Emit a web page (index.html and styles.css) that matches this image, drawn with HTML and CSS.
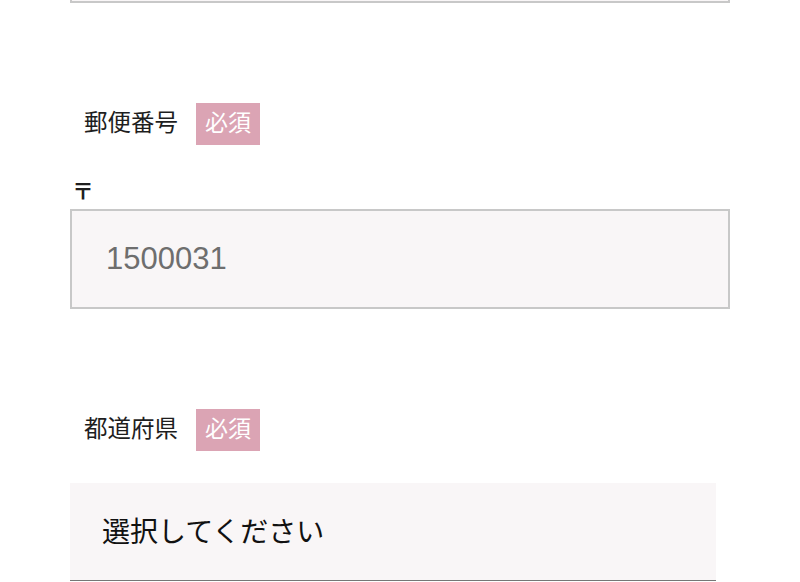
FILE: index.html
```html
<!DOCTYPE html>
<html lang="ja">
<head>
<meta charset="utf-8">
<link rel="stylesheet" href="styles.css">
</head>
<body>
<div class="form">
  <div class="prev-box"></div>

  <div class="field">
    <div class="label-row">
      <span class="label">郵便番号</span>
      <span class="badge">必須</span>
    </div>
    <div class="postal-mark">〒</div>
    <div class="text-input">1500031</div>
  </div>

  <div class="field">
    <div class="label-row">
      <span class="label">都道府県</span>
      <span class="badge">必須</span>
    </div>
    <div class="select">選択してください</div>
  </div>
</div>
</body>
</html>
```

FILE: styles.css
```css
html, body {
  margin: 0;
  padding: 0;
  background: #ffffff;
}
body {
  font-family: "Noto Sans CJK JP", "Liberation Sans", sans-serif;
  color: #1e1e1e;
  overflow: hidden;
}
.form {
  width: 660px;
  margin-left: 70px;
}
.prev-box {
  height: 96px;
  margin-top: -97px;
  border: 2px solid #c8c8c8;
  background: #f9f6f7;
}
.field {
  margin-top: 100px;
}
.label-row {
  display: flex;
  align-items: flex-start;
  height: 42px;
}
.label {
  padding-left: 14px;
  font-size: 23.5px;
  line-height: 37px;
  padding-bottom: 5px;
  margin-right: 18px;
}
.badge {
  background: #dba4b4;
  color: #ffffff;
  font-size: 23px;
  line-height: 37px;
  height: 37px;
  padding: 0 9px 5px;
}
.postal-mark {
  margin-top: 30px;
  padding-left: 2px;
  font-size: 22px;
  line-height: 28px;
  font-weight: 700;
}
.text-input {
  margin-top: 6px;
  height: 96px;
  border: 2px solid #c8c8c8;
  background: #f9f6f7;
  font-family: "Liberation Sans", Arial, sans-serif;
  font-size: 31px;
  color: #6e6e6e;
  line-height: 96px;
  padding-left: 34px;
}
.select {
  margin-top: 32px;
  width: 646px;
  height: 98px;
  background: #f9f6f7;
  border-bottom: 1px solid #767676;
  font-size: 28px;
  line-height: 94px;
  padding-left: 32px;
  box-sizing: border-box;
  color: #111111;
}
```
